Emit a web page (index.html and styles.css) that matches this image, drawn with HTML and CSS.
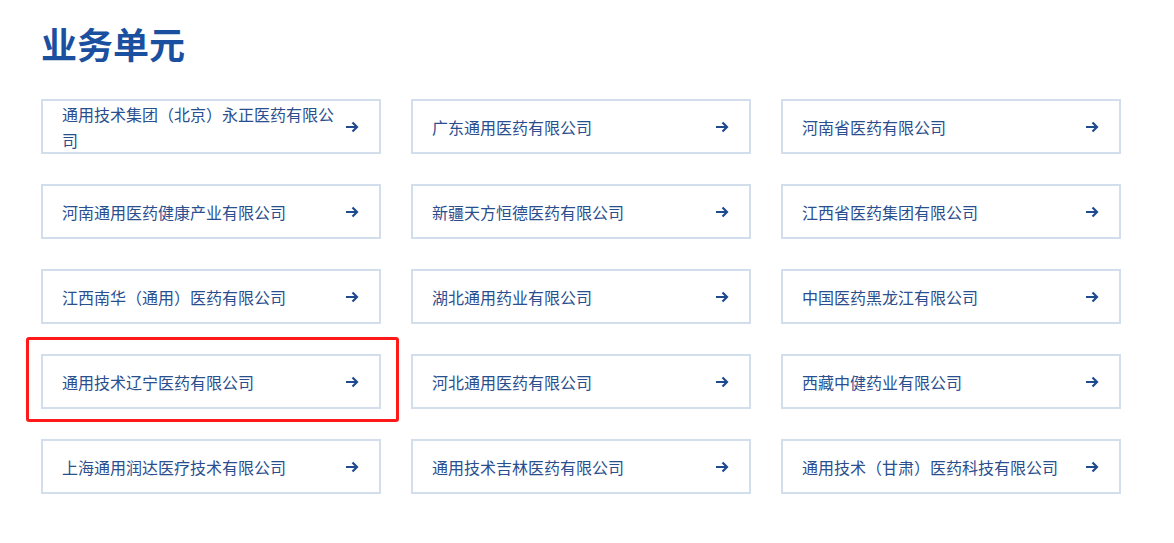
FILE: index.html
```html
<!DOCTYPE html>
<html lang="zh-CN">
<head>
    <meta charset="UTF-8">
    <meta name="viewport" content="width=device-width, initial-scale=1.0">
    <title>业务单元</title>
    <link rel="stylesheet" href="styles.css">
</head>
<body>

<div class="section">
    <h2 class="title">业务单元</h2>

    <div class="unitGrid">
        <a class="unit" href="#"><span class="unitName">通用技术集团（北京）永正医药有限公司</span><svg class="arrow" viewBox="0 0 14 12"><path d="M1 6H12M7.5 1.5L12 6L7.5 10.5" fill="none" stroke="currentColor" stroke-width="2.2"/></svg></a>
        <a class="unit" href="#"><span class="unitName">广东通用医药有限公司</span><svg class="arrow" viewBox="0 0 14 12"><path d="M1 6H12M7.5 1.5L12 6L7.5 10.5" fill="none" stroke="currentColor" stroke-width="2.2"/></svg></a>
        <a class="unit" href="#"><span class="unitName">河南省医药有限公司</span><svg class="arrow" viewBox="0 0 14 12"><path d="M1 6H12M7.5 1.5L12 6L7.5 10.5" fill="none" stroke="currentColor" stroke-width="2.2"/></svg></a>

        <a class="unit" href="#"><span class="unitName">河南通用医药健康产业有限公司</span><svg class="arrow" viewBox="0 0 14 12"><path d="M1 6H12M7.5 1.5L12 6L7.5 10.5" fill="none" stroke="currentColor" stroke-width="2.2"/></svg></a>
        <a class="unit" href="#"><span class="unitName">新疆天方恒德医药有限公司</span><svg class="arrow" viewBox="0 0 14 12"><path d="M1 6H12M7.5 1.5L12 6L7.5 10.5" fill="none" stroke="currentColor" stroke-width="2.2"/></svg></a>
        <a class="unit" href="#"><span class="unitName">江西省医药集团有限公司</span><svg class="arrow" viewBox="0 0 14 12"><path d="M1 6H12M7.5 1.5L12 6L7.5 10.5" fill="none" stroke="currentColor" stroke-width="2.2"/></svg></a>

        <a class="unit" href="#"><span class="unitName">江西南华（通用）医药有限公司</span><svg class="arrow" viewBox="0 0 14 12"><path d="M1 6H12M7.5 1.5L12 6L7.5 10.5" fill="none" stroke="currentColor" stroke-width="2.2"/></svg></a>
        <a class="unit" href="#"><span class="unitName">湖北通用药业有限公司</span><svg class="arrow" viewBox="0 0 14 12"><path d="M1 6H12M7.5 1.5L12 6L7.5 10.5" fill="none" stroke="currentColor" stroke-width="2.2"/></svg></a>
        <a class="unit" href="#"><span class="unitName">中国医药黑龙江有限公司</span><svg class="arrow" viewBox="0 0 14 12"><path d="M1 6H12M7.5 1.5L12 6L7.5 10.5" fill="none" stroke="currentColor" stroke-width="2.2"/></svg></a>

        <a class="unit marked" href="#"><span class="unitName">通用技术辽宁医药有限公司</span><svg class="arrow" viewBox="0 0 14 12"><path d="M1 6H12M7.5 1.5L12 6L7.5 10.5" fill="none" stroke="currentColor" stroke-width="2.2"/></svg></a>
        <a class="unit" href="#"><span class="unitName">河北通用医药有限公司</span><svg class="arrow" viewBox="0 0 14 12"><path d="M1 6H12M7.5 1.5L12 6L7.5 10.5" fill="none" stroke="currentColor" stroke-width="2.2"/></svg></a>
        <a class="unit" href="#"><span class="unitName">西藏中健药业有限公司</span><svg class="arrow" viewBox="0 0 14 12"><path d="M1 6H12M7.5 1.5L12 6L7.5 10.5" fill="none" stroke="currentColor" stroke-width="2.2"/></svg></a>

        <a class="unit" href="#"><span class="unitName">上海通用润达医疗技术有限公司</span><svg class="arrow" viewBox="0 0 14 12"><path d="M1 6H12M7.5 1.5L12 6L7.5 10.5" fill="none" stroke="currentColor" stroke-width="2.2"/></svg></a>
        <a class="unit" href="#"><span class="unitName">通用技术吉林医药有限公司</span><svg class="arrow" viewBox="0 0 14 12"><path d="M1 6H12M7.5 1.5L12 6L7.5 10.5" fill="none" stroke="currentColor" stroke-width="2.2"/></svg></a>
        <a class="unit" href="#"><span class="unitName">通用技术（甘肃）医药科技有限公司</span><svg class="arrow" viewBox="0 0 14 12"><path d="M1 6H12M7.5 1.5L12 6L7.5 10.5" fill="none" stroke="currentColor" stroke-width="2.2"/></svg></a>
    </div>
</div>

</body>
</html>
```

FILE: styles.css
```css
body {
    background-color: #ffffff;
    font-family: "Noto Sans CJK SC", "Noto Sans", sans-serif;
    margin: 0;
    padding: 0;
}

.section {
    padding: 19px 0 0 41px;
    width: 1080px;
}

.title {
    color: #1b4f9f;
    font-size: 36px;
    font-weight: 700;
    line-height: 48px;
    margin: 0 0 32px 0;
    letter-spacing: 0;
}

.unitGrid {
    display: grid;
    grid-template-columns: repeat(3, 340px);
    grid-auto-rows: 55px;
    column-gap: 30px;
    row-gap: 30px;
}

.unit {
    position: relative;
    display: flex;
    align-items: center;
    justify-content: space-between;
    border: 2px solid #d3deec;
    padding: 0 20px 0 19px;
    text-decoration: none;
    color: #2a4f8f;
}

.unitName {
    font-size: 16px;
    line-height: 26px;
    max-width: 280px;
    text-spacing-trim: space-all;
}

.arrow {
    width: 14px;
    height: 12px;
    flex-shrink: 0;
    color: #1f4a8d;
}

/* annotation frame */
.marked::after {
    content: "";
    position: absolute;
    left: -17px;
    top: -19px;
    right: -20px;
    bottom: -15px;
    border: 3px solid #ff1a1a;
    border-radius: 3px;
}
```
